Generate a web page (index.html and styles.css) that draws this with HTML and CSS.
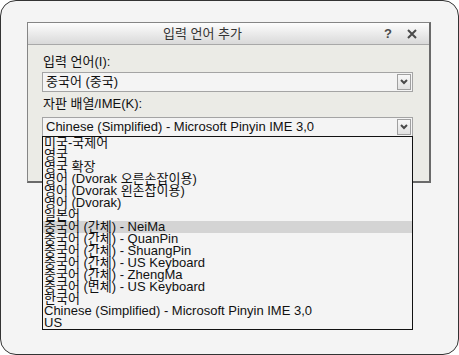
FILE: index.html
```html
<!DOCTYPE html>
<html lang="ko">
<head>
  <meta charset="UTF-8" />
  <title>입력 언어 추가</title>
  <link rel="stylesheet" href="styles.css">
</head>
<body>
  <div class="screen">
    <div class="dialog">
      <div class="titlebar">
        <span class="title">입력 언어 추가</span>
        <span class="help">?</span>
        <svg class="close" width="10" height="10" viewBox="0 0 10 10">
          <path d="M1 1 L9 9 M9 1 L1 9" stroke="#4a4a4a" stroke-width="2" fill="none"/>
        </svg>
      </div>
      <div class="content">
        <div class="field-label">입력 언어(I):</div>
        <div class="combo">
          <span class="combo-text">중국어 (중국)</span>
          <span class="combo-btn">
            <svg width="8" height="6" viewBox="0 0 8 6"><path d="M1 1 L4 4 L7 1" stroke="#4a4a4a" stroke-width="2" fill="none"/></svg>
          </span>
        </div>
        <div class="field-label second">자판 배열/IME(K):</div>
        <div class="combo">
          <span class="combo-text">Chinese (Simplified) - Microsoft Pinyin IME 3,0</span>
          <span class="combo-btn">
            <svg width="8" height="6" viewBox="0 0 8 6"><path d="M1 1 L4 4 L7 1" stroke="#4a4a4a" stroke-width="2" fill="none"/></svg>
          </span>
        </div>
      </div>
    </div>

    <ul class="droplist">
      <li>미국-국제어</li>
      <li>영국</li>
      <li>영국 확장</li>
      <li>영어 (Dvorak 오른손잡이용)</li>
      <li>영어 (Dvorak 왼손잡이용)</li>
      <li>영어 (Dvorak)</li>
      <li>일본어</li>
      <li class="selected">중국어 (간체) - NeiMa</li>
      <li>중국어 (간체) - QuanPin</li>
      <li>중국어 (간체) - ShuangPin</li>
      <li>중국어 (간체) - US Keyboard</li>
      <li>중국어 (간체) - ZhengMa</li>
      <li>중국어 (번체) - US Keyboard</li>
      <li>한국어</li>
      <li>Chinese (Simplified) - Microsoft Pinyin IME 3,0</li>
      <li>US</li>
    </ul>
  </div>
</body>
</html>
```

FILE: styles.css
```css
:root {
  --bg: #f4f4f4;
  --panel: #ebebe6;
  --texto: #111;
  --borda: #a4a4a4;
}
body {
  margin: 0;
  font-family: "Liberation Sans", "Noto Sans CJK KR", sans-serif;
  font-size: 13px;
  color: var(--texto);
}
.screen {
  position: relative;
  box-sizing: border-box;
  width: 459px;
  height: 355px;
  border: 1px solid #333;
  border-radius: 16px;
  background: var(--bg);
  padding: 21px 0 0 26px;
}
.dialog {
  width: 401px;
  height: 158px;
  background: var(--panel);
  border: 1px solid #858585;
  border-right: 2px solid #6a6a6a;
  border-bottom: 2px solid #6a6a6a;
}
.titlebar {
  display: flex;
  align-items: center;
  height: 21px;
  background: linear-gradient(#fdfdfd, #d9d9d9);
  border-bottom: 1px solid #a8a8a8;
  color: #333;
}
.title {
  margin-left: 135px;
  line-height: 21px;
}
.help {
  margin-left: auto;
  font-weight: bold;
  font-size: 13px;
  color: #4a4a4a;
}
.close {
  margin: 0 12px 0 15px;
}
.content {
  padding: 9px 0 0 14px;
}
.field-label {
  line-height: 16px;
  margin-left: 1px;
  margin-bottom: 2px;
}
.field-label.second {
  margin-top: 4px;
  margin-bottom: 5px;
}
.combo {
  box-sizing: border-box;
  display: flex;
  align-items: center;
  width: 371px;
  height: 20px;
  background: var(--bg);
  border: 1px solid var(--borda);
}
.combo-text {
  flex: 1;
  padding-left: 3px;
  line-height: 18px;
}
.combo-btn {
  box-sizing: border-box;
  display: flex;
  align-items: center;
  justify-content: center;
  width: 14px;
  height: 16px;
  margin-right: 1px;
  background: linear-gradient(#f8f8f8, #e2e2e2);
  border: 1px solid #a0a0a0;
}
.droplist {
  position: absolute;
  left: 41px;
  top: 135px;
  box-sizing: border-box;
  width: 371px;
  margin: 0;
  padding: 0;
  list-style: none;
  background: var(--bg);
  border: 1px solid #111;
}
.droplist li {
  height: 12px;
  line-height: 12px;
  padding-left: 1px;
  white-space: nowrap;
}
.droplist li.selected {
  background: #d4d4d4;
}
```
